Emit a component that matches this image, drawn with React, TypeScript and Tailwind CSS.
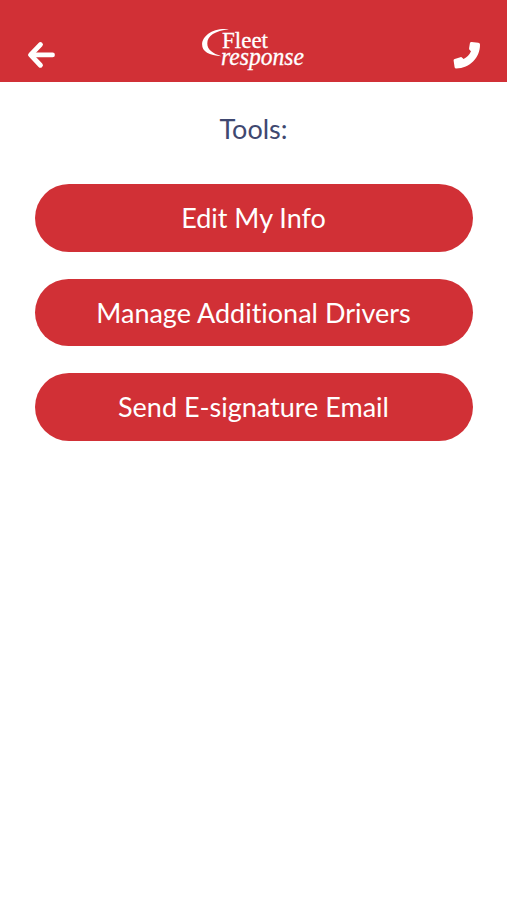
const TOOLS = ["Edit My Info", "Manage Additional Drivers", "Send E-signature Email"];

function BackIcon() {
  return (
    <svg
      width="28"
      height="28"
      viewBox="0 0 28 28"
      fill="none"
      stroke="currentColor"
      strokeWidth="5"
      strokeLinecap="round"
      strokeLinejoin="round"
      aria-hidden="true"
    >
      <path d="M13.400 3.600L3.600 13.900L13.400 24.200" />
      <path d="M4 13.900H25.600" strokeWidth="4.600" />
    </svg>
  );
}

function PhoneIcon() {
  return (
    <svg width="28" height="28" viewBox="0 0 28 28" fill="currentColor" aria-hidden="true">
      <path d="M18.600 0.900L25.300 1.700Q26.900 1.900 27 3.500C27.200 16.500 17 27.200 3.200 27.500Q1.800 27.500 1.600 26.200L0.600 19.600Q0.500 18.300 1.700 18L7.400 16.200Q8.500 15.900 9.200 16.700L10.600 18.100Q15.700 15.500 18 10.300L16.700 9Q15.900 8.200 16.100 7.200L16.900 2.200Q17.200 0.800 18.600 0.900Z" />
    </svg>
  );
}

function Logo() {
  return (
    <svg width="104" height="48" viewBox="0 0 104 48" overflow="visible" role="img" aria-label="Fleet response">
      <path
        d="M27 2.300C11 0.500 0.100 9 0.100 17.500C0.100 24.500 7 28.600 19.500 29.200C10.500 26.500 5.300 22.500 5.300 16.500C5.300 9 13 3.700 27 2.300Z"
        fill="white"
      />
      <g fill="white" stroke="white" strokeWidth="0.3" fontFamily="Liberation Serif, serif">
        <text x="20" y="20.500" fontSize="24" textLength="46" lengthAdjust="spacingAndGlyphs">
          Fleet
        </text>
        <text x="19" y="37.500" fontSize="25" fontStyle="italic" textLength="83" lengthAdjust="spacingAndGlyphs">
          response
        </text>
      </g>
    </svg>
  );
}

export default function App() {
  return (
    <div className="min-h-screen bg-white font-[Lato,sans-serif]">
      <header className="flex h-[82px] items-start justify-between bg-[#d13036] px-[27px] pt-[27px]">
        <button className="mt-[13.500px] text-white" aria-label="Back">
          <BackIcon />
        </button>
        <Logo />
        <button className="mt-[14px] -mr-px text-white" aria-label="Call">
          <PhoneIcon />
        </button>
      </header>

      <main className="px-[34.500px] pt-[27px]">
        <h1 className="text-center text-[27px] leading-10 text-[#3f4870]">Tools:</h1>
        <div className="mt-[35px] flex flex-col gap-[27px]">
          {TOOLS.map((tool) => (
            <button
              key={tool}
              className="h-[67.500px] rounded-full bg-[#d13036] pt-px text-[27px] text-white [font-variant-ligatures:none]"
            >
              {tool}
            </button>
          ))}
        </div>
      </main>
    </div>
  );
}
